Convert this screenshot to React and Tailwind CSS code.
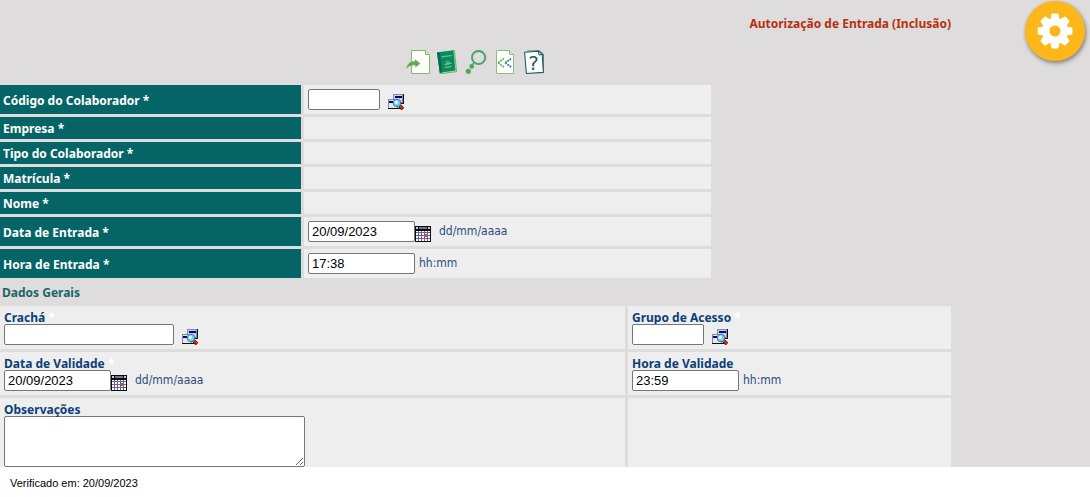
import { useState } from "react";

function GearIcon() {
    return (
        <svg width="36" height="36" viewBox="-18 -18 36 36" fill="#fff" aria-hidden="true">
            <circle r="12.8" />
            {[0, 45, 90, 135].map((angle) => (
                <path
                    key={angle}
                    d="M-2.6 -17.4H2.6Q3.4 -17.4 3.6 -16.6L4.8 -11V11L3.6 16.6Q3.4 17.4 2.6 17.4H-2.6Q-3.4 17.4 -3.6 16.6L-4.8 11V-11L-3.6 -16.6Q-3.4 -17.4 -2.6 -17.4Z"
                    transform={`rotate(${angle})`}
                />
            ))}
            <circle r="5.6" fill="#fdb71a" />
        </svg>
    );
}

function SendPageIcon() {
    return (
        <svg width="24" height="24" viewBox="0 0 24 24" aria-hidden="true">
            <path d="M5.5 .5H19.5L23.5 4.5V23.5H5.5Z" fill="#fff" stroke="#83bd62" />
            <path d="M19.5 .5V4.5H23.5" fill="#dcebd3" stroke="#83bd62" />
            <path d="M.3 18.8C1.2 13.6 4.6 11 9 11.2V9.2L14.4 13.4L9.4 17.6V15.4C6 14.8 3 15.8 .3 18.8Z" fill="#62ab4e" />
        </svg>
    );
}

function PassportIcon() {
    return (
        <svg width="24" height="24" viewBox="0 0 24 24" aria-hidden="true">
            <path d="M4 2.5L19.4 .5L21.6 21.6L5.2 23.8Z" fill="#b9dca8" stroke="#6fb85c" />
            <path d="M2 2.6L18.4 .4L20.4 20.6L4.8 22.8Z" fill="#078a66" />
            <path d="M2 2.6L4.6 2.2L7.2 22.4L4.8 22.8Z" fill="#05694f" />
            <path d="M6.8 6.8L16.6 5.5" stroke="#8fcf8b" strokeWidth="1.4" strokeDasharray="1.3 .5" />
            <circle cx="12.8" cy="12.8" r="2.4" fill="#3fae62" />
            <path d="M9.4 14.4L16.4 13.4M9.8 17.4L16.6 16.5" stroke="#9ad67c" strokeWidth=".9" />
        </svg>
    );
}

function SearchIcon() {
    return (
        <svg width="24" height="24" viewBox="0 0 24 24" aria-hidden="true">
            <circle cx="14.6" cy="7.5" r="6.6" fill="none" stroke="#45a56f" strokeWidth="2" />
            <circle cx="7.7" cy="16.4" r="2.4" fill="#4aa860" />
            <circle cx="4.3" cy="21.3" r="2.6" fill="#4fab5c" />
            <path d="M9.8 12.7L8.4 15" stroke="#4aa860" strokeWidth="1.4" />
        </svg>
    );
}

function BackPageIcon() {
    return (
        <svg width="24" height="24" viewBox="0 0 24 24" fill="none" aria-hidden="true">
            <path d="M3.5 .5H16.5L20.5 4.5V23.5H3.5Z" fill="#fff" stroke="#8cc07a" />
            <path d="M16.5 .5V4.5H20.5" fill="#dcebd3" stroke="#8cc07a" />
            <path d="M5.2 12.8L11 8.4M5.2 12.8L11 17.2" stroke="#5cae66" strokeWidth="1.8" strokeDasharray="1.8 .9" />
            <path d="M12.2 12.8L18.4 8.4M12.2 12.8L18.4 17.2" stroke="#23877f" strokeWidth="1.8" strokeDasharray="1.8 .9" />
        </svg>
    );
}

function HelpPageIcon() {
    return (
        <svg width="24" height="24" viewBox="0 0 24 24" aria-hidden="true">
            <path d="M5 1.2L17 .6L21.4 4V22" fill="#fff" stroke="#3d7a72" />
            <path d="M2.6 2.2L16.6 1.2L20.2 4.6L21.4 22.4L4.4 23.5Z" fill="#fff" stroke="#1d5f5e" strokeWidth="1.1" />
            <path d="M16.6 1.2L16.9 5L20.2 4.6" fill="none" stroke="#1d5f5e" />
            <text x="11.6" y="19.6" textAnchor="middle" fontFamily="DejaVu Sans, sans-serif" fontSize="20" fill="#1d5f5e">?</text>
        </svg>
    );
}

function LookupIcon() {
    return (
        <svg width="16" height="16" viewBox="0 0 16 16" aria-hidden="true">
            <g shapeRendering="crispEdges">
                <path d="M5 0H16V10H5Z" fill="#111" />
                <path d="M5 0H15V9H5Z" fill="#8888a0" />
                <path d="M6 1H14V8H6Z" fill="#d0d0e4" />
                <path d="M7 2H14V4H7Z" fill="#00008b" />
                <path d="M0 5H10V15H0Z" fill="#8888a0" />
                <path d="M1 6H9V14H1Z" fill="#e6e6f0" />
                <path d="M1 7H5V9H1Z" fill="#00008b" />
                <path d="M0 14H12V15H0Z" fill="#111" />
            </g>
            <path d="M11.5 11.5L15 15" stroke="#111" strokeWidth="3.6" />
            <path d="M11.5 11.3L15 14.6" stroke="#e0261c" strokeWidth="2.4" />
            <circle cx="9" cy="9" r="3.8" fill="#6fd0ee" stroke="#3d6c88" strokeWidth=".9" />
            <circle cx="8.3" cy="8.2" r="1.7" fill="#e8fbff" />
        </svg>
    );
}

function CalendarIcon() {
    return (
        <svg width="16" height="16" viewBox="0 0 16 16" shapeRendering="crispEdges" aria-hidden="true">
            <path d="M0 0H16V16H0Z" fill="#0a0a14" />
            <path d="M4 1H12V3H4Z" fill="#777" />
            <path d="M1 1H3V3H1ZM13 1H15V3H13Z" fill="#ccc" />
            <path d="M1 5H15V15H1Z" fill="#fff" />
            <path d="M1 6.5H15M1 9.5H15M1 12.5H15M3.5 5V15M6.5 5V15M9.5 5V15M12.5 5V15" stroke="#6262a6" />
            <path d="M10 8H13V11H10Z" fill="#d8501c" />
        </svg>
    );
}

const toolbar = [
    { label: "Enviar", Icon: SendPageIcon },
    { label: "Cadastro", Icon: PassportIcon },
    { label: "Pesquisar", Icon: SearchIcon },
    { label: "Voltar", Icon: BackPageIcon },
    { label: "Ajuda", Icon: HelpPageIcon },
];

const inputBase = "h-[21px] rounded-xs border border-[#767676] bg-white px-[3px] font-['Liberation_Sans',Arial,sans-serif] text-[13px] text-black";
const hintText = "font-['DejaVu_Sans_Condensed','DejaVu_Sans',sans-serif] leading-[21px] text-[#2b4c7e]";

function TextField({ id, width, initial = "" }) {
    const [value, setValue] = useState(initial);
    return (
        <input
            id={id}
            type="text"
            value={value}
            onChange={(e) => setValue(e.target.value)}
            className={`${inputBase} ${width}`}
        />
    );
}

function LookupField({ id, width }) {
    return (
        <div className="flex items-end">
            <TextField id={id} width={width} />
            <button type="button" aria-label="Procurar" className="ml-2 cursor-pointer">
                <LookupIcon />
            </button>
        </div>
    );
}

function DateField({ id }) {
    return (
        <div className="flex items-end">
            <TextField id={id} width="w-[107px]" initial="20/09/2023" />
            <button type="button" aria-label="Abrir calendário" className="cursor-pointer">
                <CalendarIcon />
            </button>
            <span className={`ml-2 ${hintText}`}>dd/mm/aaaa</span>
        </div>
    );
}

function TimeField({ id, initial }) {
    return (
        <div className="flex items-end">
            <TextField id={id} width="w-[107px]" initial={initial} />
            <span className={`ml-1 ${hintText}`}>hh:mm</span>
        </div>
    );
}

function Row({ label, htmlFor, children }) {
    const height = children ? "min-h-[29px]" : "min-h-[22px]";
    return (
        <div className={`grid grid-cols-[301fr_407fr] gap-[3px] ${height}`}>
            <div className="flex items-center bg-[#056466] px-[3px] pt-[2px] font-bold text-white">
                {htmlFor ? <label htmlFor={htmlFor}>{label} *</label> : <span>{label} *</span>}
            </div>
            <div className="bg-[#eee] px-1 py-1">{children}</div>
        </div>
    );
}

function Cell({ label, htmlFor, required, children }) {
    return (
        <div className="bg-[#eee] px-1 pt-[6px] pb-1">
            <label htmlFor={htmlFor} className="block leading-3 font-bold text-[#0b3f78]">
                {label}
                {required && <span className="text-white"> *</span>}
            </label>
            {children}
        </div>
    );
}

export default function App() {
    const [notes, setNotes] = useState("");

    return (
        <div className="min-h-screen bg-white font-['Noto_Sans',Tahoma,sans-serif] text-[12px] leading-4">
            <main className="relative bg-[#dedcdd]">
                <button
                    type="button"
                    aria-label="Configurações"
                    className="absolute top-px right-[5px] flex size-[60px] cursor-pointer items-center justify-center rounded-full bg-[#fdb71a] shadow-[1px_2px_4px_rgba(0,0,0,0.45)]"
                >
                    <GearIcon />
                </button>

                <form className="max-w-[951px]" onSubmit={(e) => e.preventDefault()}>
                    <h1 className="pt-4 text-right font-bold text-[#b5300f]">Autorização de Entrada (Inclusão)</h1>

                    <div className="flex justify-center gap-[5px] pt-[18px] pb-[11px]">
                        {toolbar.map(({ label, Icon }) => (
                            <button key={label} type="button" aria-label={label} className="cursor-pointer">
                                <Icon />
                            </button>
                        ))}
                    </div>

                    <section className="flex max-w-[711px] flex-col gap-[3px]">
                        <Row label="Código do Colaborador" htmlFor="codigo">
                            <LookupField id="codigo" width="w-[72px]" />
                        </Row>
                        <Row label="Empresa" />
                        <Row label="Tipo do Colaborador" />
                        <Row label="Matrícula" />
                        <Row label="Nome" />
                        <Row label="Data de Entrada" htmlFor="data-entrada">
                            <DateField id="data-entrada" />
                        </Row>
                        <Row label="Hora de Entrada" htmlFor="hora-entrada">
                            <TimeField id="hora-entrada" initial="17:38" />
                        </Row>
                    </section>

                    <h2 className="px-[2px] pt-[7px] pb-[5px] font-bold text-[#1b6566]">Dados Gerais</h2>

                    <section className="grid grid-cols-[625fr_323fr] gap-[3px]">
                        <Cell label="Crachá" htmlFor="cracha" required>
                            <LookupField id="cracha" width="w-[170px]" />
                        </Cell>
                        <Cell label="Grupo de Acesso" htmlFor="grupo" required>
                            <LookupField id="grupo" width="w-[72px]" />
                        </Cell>
                        <Cell label="Data de Validade" htmlFor="data-validade" required>
                            <DateField id="data-validade" />
                        </Cell>
                        <Cell label="Hora de Validade" htmlFor="hora-validade">
                            <TimeField id="hora-validade" initial="23:59" />
                        </Cell>
                        <div className="bg-[#eee] px-1 pt-[6px]">
                            <label htmlFor="observacoes" className="block leading-3 font-bold text-[#0b3f78]">
                                Observações
                            </label>
                            <textarea
                                id="observacoes"
                                value={notes}
                                onChange={(e) => setNotes(e.target.value)}
                                className="block h-[51px] w-[301px] rounded-xs border border-[#767676] bg-white p-[2px]"
                            />
                        </div>
                        <div className="bg-[#eee]" />
                    </section>
                </form>
            </main>

            <footer className="px-[10px] py-2 font-['Liberation_Sans',Arial,sans-serif] text-[11px] text-black">
                Verificado em: 20/09/2023
            </footer>
        </div>
    );
}
